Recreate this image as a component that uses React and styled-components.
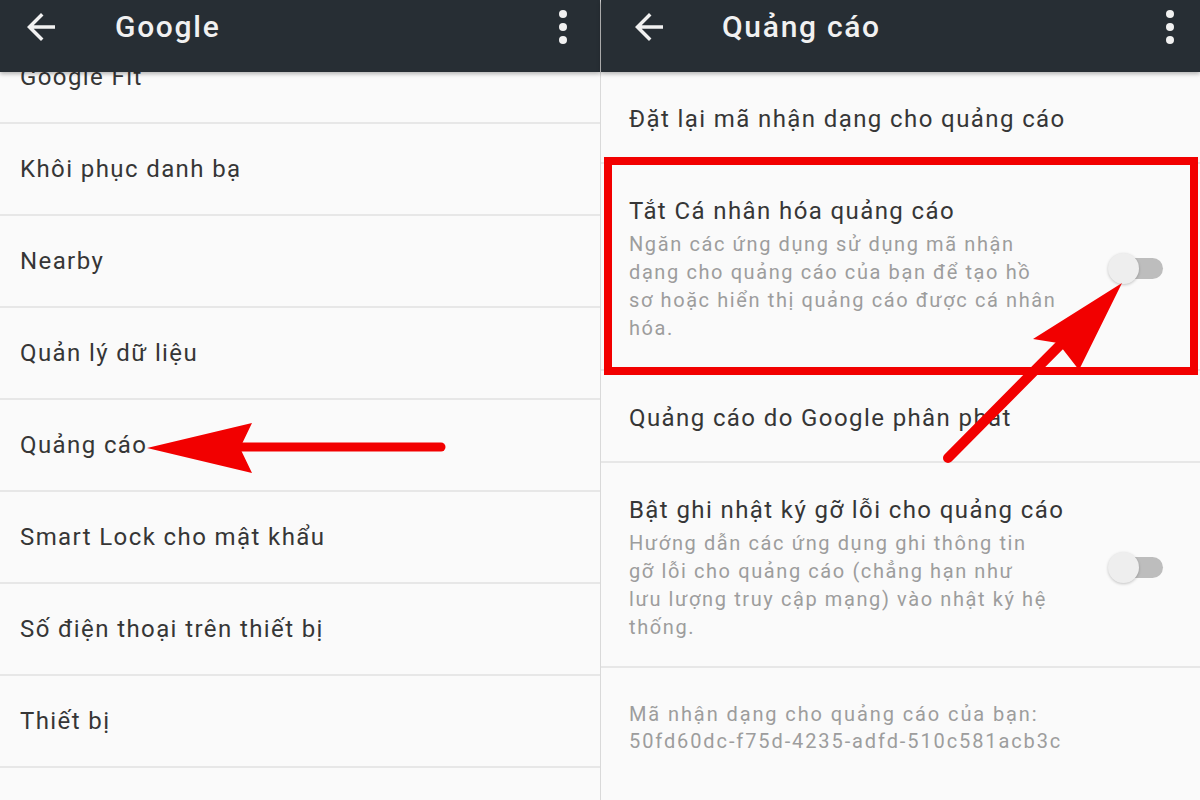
import React from "react";
import styled, { createGlobalStyle } from "styled-components";

const GlobalStyle = createGlobalStyle`
  html, body { margin: 0; padding: 0; background: #fafafa; }
  body { font-family: Roboto, "Noto Sans", "Liberation Sans", sans-serif; }
  * { box-sizing: border-box; }
`;

const Page = styled.div`
  position: relative;
  display: grid;
  grid-template-columns: 600px 600px;
  width: 1200px;
  height: 800px;
  overflow: hidden;
  background: #fafafa;
`;

const Panel = styled.section`
  display: flex;
  flex-direction: column;
  height: 800px;
  background: #fafafa;
  border-left: ${(p) => (p.$divider ? "1px solid #d9d9d9" : "none")};
`;

const Toolbar = styled.header`
  position: relative;
  z-index: 1;
  flex: none;
  display: flex;
  align-items: center;
  height: 72px;
  padding: 0 ${(p) => p.$padRight}px 18px ${(p) => p.$padLeft}px;
  background: #272e34;
  box-shadow: 0 2px 4px rgba(0, 0, 0, 0.28);
`;

const Title = styled.h1`
  margin: 0 0 0 ${(p) => p.$gap}px;
  flex: 1;
  font-size: 30px;
  font-weight: 500;
  letter-spacing: 1.7px;
  color: #f1f1f1;
  line-height: 36px;
  white-space: nowrap;
`;

const IconBox = styled.svg`
  flex: none;
  display: block;
`;

const BackIcon = () => (
  <IconBox width="42" height="42" viewBox="0 0 24 24" fill="#f1f1f1">
    <path d="M20 11H7.83l5.59-5.59L12 4l-8 8 8 8 1.41-1.41L7.83 13H20v-2z" />
  </IconBox>
);

const MoreIcon = () => (
  <IconBox width="12" height="40" viewBox="0 0 12 40" fill="#f1f1f1">
    <circle cx="6" cy="7" r="4" />
    <circle cx="6" cy="20" r="4" />
    <circle cx="6" cy="33" r="4" />
  </IconBox>
);

const Body = styled.div`
  flex: 1;
  overflow: hidden;
`;

const List = styled.ul`
  list-style: none;
  margin: ${(p) => p.$offset || 0}px 0 0 0;
  padding: 0;
`;

const Item = styled.li`
  display: flex;
  align-items: center;
  height: 92px;
  padding: 0 20px;
  border-bottom: 2px solid #e7e7e7;
  font-size: 24px;
  letter-spacing: 1.4px;
  color: #363636;
  white-space: nowrap;
`;

const SettingRow = styled.div`
  position: relative;
  display: flex;
  align-items: center;
  min-height: ${(p) => (p.$single ? "92px" : "auto")};
  padding: ${(p) => p.$pad || "31px 37px 25px 28px"};
  border-bottom: ${(p) => (p.$noLine ? "none" : "2px solid #e7e7e7")};

  ${(p) =>
    p.$highlight &&
    `
    &::after {
      content: "";
      position: absolute;
      top: -7px;
      bottom: -6px;
      left: 3px;
      right: 2px;
      border: 8px solid #f20000;
      pointer-events: none;
    }
  `}
`;

const SettingText = styled.div`
  flex: 1;
  display: flex;
  flex-direction: column;
`;

const SettingTitle = styled.div`
  font-size: 24px;
  line-height: 32px;
  letter-spacing: 1.4px;
  color: #363636;
  white-space: nowrap;
`;

const SettingDesc = styled.div`
  margin-top: ${(p) => (p.$flush ? 0 : 3)}px;
  font-size: 20px;
  line-height: ${(p) => p.$lh || 28}px;
  letter-spacing: ${(p) => p.$ls || 1.6}px;
  color: #9d9d9d;
  white-space: nowrap;
`;

const Switch = styled.div`
  flex: none;
  display: flex;
  align-items: center;
`;

const Thumb = styled.span`
  position: relative;
  z-index: 1;
  width: 31px;
  height: 31px;
  border-radius: 50%;
  background: #eeeeee;
  box-shadow: 0 1px 3px rgba(0, 0, 0, 0.22);
`;

const Track = styled.span`
  width: 45px;
  height: 21px;
  margin-left: -21px;
  border-radius: 11px;
  background: #bdbdbd;
`;

const Annotations = styled.svg`
  position: absolute;
  left: 0;
  top: 0;
  width: 1200px;
  height: 800px;
  pointer-events: none;
  z-index: 5;
`;

const leftItems = [
  "Google Fit",
  "Khôi phục danh bạ",
  "Nearby",
  "Quản lý dữ liệu",
  "Quảng cáo",
  "Smart Lock cho mật khẩu",
  "Số điện thoại trên thiết bị",
  "Thiết bị",
  "",
];

const Lines = ({ lines }) =>
  lines.map((l, i) => (
    <React.Fragment key={i}>
      {l}
      {i < lines.length - 1 && <br />}
    </React.Fragment>
  ));

export default function App() {
  return (
    <>
      <GlobalStyle />
      <Page>
        <Panel>
          <Toolbar $padLeft={20} $padRight={31}>
            <BackIcon />
            <Title $gap={53}>Google</Title>
            <MoreIcon />
          </Toolbar>
          <Body>
            <List $offset={-40}>
              {leftItems.map((t, i) => (
                <Item key={i}>{t}</Item>
              ))}
            </List>
          </Body>
        </Panel>

        <Panel $divider>
          <Toolbar $padLeft={27} $padRight={24}>
            <BackIcon />
            <Title $gap={52}>Quảng cáo</Title>
            <MoreIcon />
          </Toolbar>
          <Body>
            <SettingRow $single $pad="4px 37px 0 28px">
              <SettingText>
                <SettingTitle>Đặt lại mã nhận dạng cho quảng cáo</SettingTitle>
              </SettingText>
            </SettingRow>

            <SettingRow $highlight $pad="31px 37px 27px 28px">
              <SettingText>
                <SettingTitle>Tắt Cá nhân hóa quảng cáo</SettingTitle>
                <SettingDesc>
                  <Lines
                    lines={[
                      "Ngăn các ứng dụng sử dụng mã nhận",
                      "dạng cho quảng cáo của bạn để tạo hồ",
                      "sơ hoặc hiển thị quảng cáo được cá nhân",
                      "hóa.",
                    ]}
                  />
                </SettingDesc>
              </SettingText>
              <Switch>
                <Thumb />
                <Track />
              </Switch>
            </SettingRow>

            <SettingRow $single $pad="4px 37px 0 28px">
              <SettingText>
                <SettingTitle>Quảng cáo do Google phân phát</SettingTitle>
              </SettingText>
            </SettingRow>

            <SettingRow>
              <SettingText>
                <SettingTitle>Bật ghi nhật ký gỡ lỗi cho quảng cáo</SettingTitle>
                <SettingDesc>
                  <Lines
                    lines={[
                      "Hướng dẫn các ứng dụng ghi thông tin",
                      "gỡ lỗi cho quảng cáo (chẳng hạn như",
                      "lưu lượng truy cập mạng) vào nhật ký hệ",
                      "thống.",
                    ]}
                  />
                </SettingDesc>
              </SettingText>
              <Switch>
                <Thumb />
                <Track />
              </Switch>
            </SettingRow>

            <SettingRow $noLine $pad="33px 37px 20px 28px">
              <SettingText>
                <SettingDesc $flush $lh={27} $ls={1.9}>
                  Mã nhận dạng cho quảng cáo của bạn:
                  <br />
                  50fd60dc-f75d-4235-adfd-510c581acb3c
                </SettingDesc>
              </SettingText>
            </SettingRow>
          </Body>
        </Panel>

        <Annotations viewBox="0 0 1200 800">
          <line
            x1="241"
            y1="447"
            x2="441"
            y2="447"
            stroke="#f20000"
            strokeWidth="9"
            strokeLinecap="round"
          />
          <polygon points="147,448 252,423 240,448 252,473" fill="#f20000" />
          <line
            x1="948"
            y1="458"
            x2="1070"
            y2="335"
            stroke="#f20000"
            strokeWidth="10"
            strokeLinecap="round"
          />
          <polygon points="1122,283 1033,339 1058,343 1079,370" fill="#f20000" />
        </Annotations>
      </Page>
    </>
  );
}
